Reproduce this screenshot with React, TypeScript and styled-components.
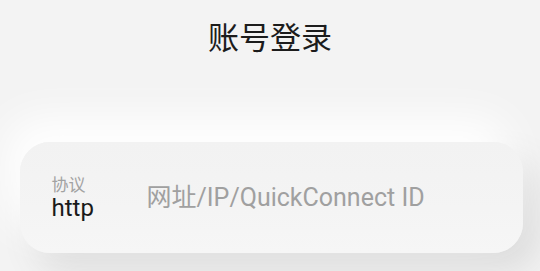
import React from 'react';
import styled, { createGlobalStyle } from 'styled-components';

const GlobalStyle = createGlobalStyle`
  html, body {
    margin: 0;
    padding: 0;
    background: #f3f3f3;
    overflow: hidden;
  }
  body {
    font-family: Roboto, 'Noto Sans CJK SC', sans-serif;
  }
`;

const Screen = styled.div`
  width: 540px;
  height: 271px;
  display: flex;
  flex-direction: column;
  align-items: center;
  background: #f3f3f3;
`;

const Title = styled.h1`
  margin: 17px 0 0;
  font-size: 31px;
  line-height: 38px;
  font-weight: 400;
  color: #1c1c1c;
  font-family: 'Noto Sans CJK SC', sans-serif;
`;

const Card = styled.div`
  box-sizing: border-box;
  width: 503px;
  height: 111px;
  margin-top: 87px;
  margin-left: 2px;
  border-radius: 30px;
  background: linear-gradient(180deg, #f2f2f2 0%, #f4f4f4 60%, #f6f6f6 100%);
  box-shadow: -14px -24px 44px #ffffff, 16px 18px 34px #dcdcdc;
  display: flex;
  align-items: center;
  padding: 0 32px;
`;

const Protocol = styled.div`
  display: flex;
  flex-direction: column;
  width: 95px;
  flex-shrink: 0;
`;

const ProtocolLabel = styled.span`
  font-family: 'Noto Sans CJK SC', sans-serif;
  font-size: 17px;
  line-height: 21px;
  color: #a2a2a2;
`;

const ProtocolValue = styled.span`
  font-size: 24px;
  line-height: 28px;
  color: #1a1a1a;
`;

const AddressInput = styled.input`
  flex: 1;
  min-width: 0;
  border: none;
  outline: none;
  background: transparent;
  padding: 0;
  font-family: Roboto, 'Noto Sans CJK SC', sans-serif;
  font-size: 25px;
  color: #1a1a1a;

  &::placeholder {
    color: #a0a0a0;
  }
`;

const App: React.FC = () => {
  return (
    <>
      <GlobalStyle />
      <Screen>
        <Title>账号登录</Title>
        <Card>
          <Protocol>
            <ProtocolLabel>协议</ProtocolLabel>
            <ProtocolValue>http</ProtocolValue>
          </Protocol>
          <AddressInput placeholder="网址/IP/QuickConnect ID" />
        </Card>
      </Screen>
    </>
  );
};

export default App;
